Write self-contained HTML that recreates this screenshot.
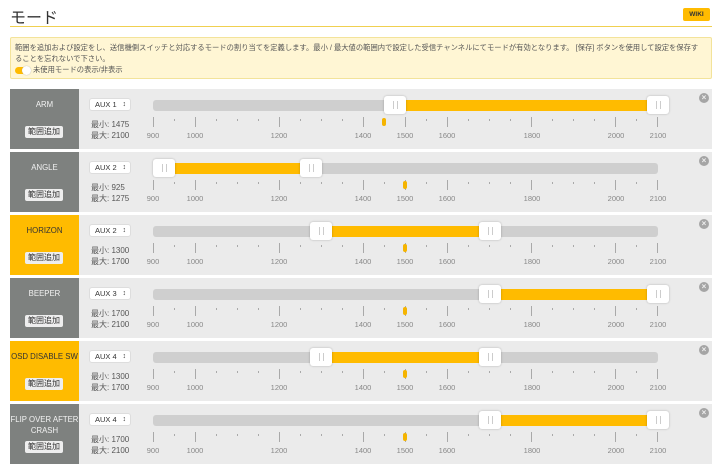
<!DOCTYPE html>
<html><head><meta charset="utf-8"><style>
*{margin:0;padding:0;box-sizing:border-box}
body{width:720px;height:472px;background:#fff;position:relative;overflow:hidden;font-family:"Liberation Sans","Noto Sans CJK JP",sans-serif;color:#333}
.a{position:absolute}
.row{position:absolute;left:0;width:720px;height:60px}
.bg{position:absolute;left:79px;top:0;width:633px;height:60px;background:#ebebeb}
.lab{position:absolute;left:10px;top:0;width:69px;height:60px;background:#7e817f;color:#f2f2f2;font-size:7.8px;text-align:center}
.lab.y{background:#ffbb00;color:#333}
.lab .t{position:absolute;left:0;right:0;top:10px;line-height:11px}
.btn{position:absolute;left:15px;top:37px;width:38px;height:12px;background:#eee;border-radius:2px;color:#333;font-size:8px;line-height:12px;text-align:center}
.sel{position:absolute;left:89px;top:9px;width:42px;height:13px;background:#fff;border:1px solid #ddd;border-radius:3px;font-size:7.5px;line-height:11px;padding-left:5px;color:#333}
.sel:after{content:"\2195";position:absolute;right:4px;top:0;font-size:7px}
.mm{position:absolute;left:91px;font-size:8px;color:#555;line-height:10px}
.trk{position:absolute;left:153px;top:11px;width:505px;height:11px;background:#cfcfcf;border-radius:3px}
.fill{position:absolute;top:11px;height:11px;background:#ffbb00}
.h{position:absolute;top:7px;width:22px;height:18px;background:#fff;border-radius:3px;box-shadow:0 0 2px rgba(0,0,0,.25)}
.h:after{content:"";position:absolute;left:9px;top:5px;width:3px;height:8px;border-left:1px solid #ccc;border-right:1px solid #ccc}
.mk{position:absolute;top:29px;width:4px;height:8px;background:#f5b400;border-radius:2px}
.tk{position:absolute;left:0;top:0}
.tl{position:absolute;top:42px;font-size:7.5px;color:#888;width:30px;margin-left:-15px;text-align:center}
.x{position:absolute;left:699px;top:4px;width:10px;height:10px;border-radius:50%;background:#a5a5a5;color:#eee;font-size:8px;line-height:10px;text-align:center;font-weight:bold}
</style></head><body>
<div class="a" style="left:10px;top:4px;font-size:16px;color:#333">モード</div>
<div class="a" style="left:683px;top:8px;width:27px;height:13px;background:#ffbb00;border-radius:2px;font-size:6.5px;font-weight:bold;text-align:center;line-height:13px;color:#333">WIKI</div>
<div class="a" style="left:10px;top:26px;width:702px;height:1px;background:#f0d050"></div>
<div class="a" style="left:10px;top:37px;width:702px;height:42px;background:#fff6d4;border:1px solid #f3e39a;border-radius:2px"></div>
<div class="a" style="left:15px;top:42px;width:690px;font-size:7.3px;line-height:11px;color:#555">範囲を追加および設定をし、送信機側スイッチと対応するモードの割り当てを定義します。最小 / 最大値の範囲内で設定した受信チャンネルにてモードが有効となります。 [保存] ボタンを使用して設定を保存す<br>ることを忘れないで下さい。</div>
<div class="a" style="left:15px;top:67px;width:14px;height:7px;background:#ffbb00;border-radius:4px"></div>
<div class="a" style="left:22px;top:66px;width:9px;height:9px;background:#fff;border-radius:50%;box-shadow:0 0 1px #999"></div>
<div class="a" style="left:33px;top:65px;font-size:7.3px;color:#555">未使用モードの表示/非表示</div>

<svg width="0" height="0" style="position:absolute"><defs><g id="tk" stroke="#999" stroke-width="0.8">
<line x1="153.5" y1="28" x2="153.5" y2="38"/><line x1="174.5" y1="30" x2="174.5" y2="32"/><line x1="195.5" y1="28" x2="195.5" y2="38"/>
<line x1="216.5" y1="30" x2="216.5" y2="32"/><line x1="237.5" y1="30" x2="237.5" y2="32"/><line x1="258.5" y1="30" x2="258.5" y2="32"/><line x1="279.5" y1="28" x2="279.5" y2="38"/>
<line x1="300.5" y1="30" x2="300.5" y2="32"/><line x1="321.5" y1="30" x2="321.5" y2="32"/><line x1="342.5" y1="30" x2="342.5" y2="32"/><line x1="363.5" y1="28" x2="363.5" y2="38"/>
<line x1="384.5" y1="30" x2="384.5" y2="32"/><line x1="405.5" y1="28" x2="405.5" y2="38"/><line x1="426.5" y1="30" x2="426.5" y2="32"/><line x1="447.5" y1="28" x2="447.5" y2="38"/>
<line x1="468.5" y1="30" x2="468.5" y2="32"/><line x1="489.5" y1="30" x2="489.5" y2="32"/><line x1="510.5" y1="30" x2="510.5" y2="32"/><line x1="531.5" y1="28" x2="531.5" y2="38"/>
<line x1="552.5" y1="30" x2="552.5" y2="32"/><line x1="573.5" y1="30" x2="573.5" y2="32"/><line x1="594.5" y1="30" x2="594.5" y2="32"/><line x1="615.5" y1="28" x2="615.5" y2="38"/>
<line x1="636.5" y1="30" x2="636.5" y2="32"/><line x1="657.5" y1="28" x2="657.5" y2="38"/></g></defs></svg>

<div class="row" style="top:89px"><div class="bg"></div><div class="lab"><div class="t">ARM</div><div class="btn">範囲追加</div></div>
<div class="sel">AUX 1</div><div class="mm" style="top:31px">最小: 1475</div><div class="mm" style="top:42px">最大: 2100</div>
<div class="trk"></div><div class="fill" style="left:395px;width:263px"></div><div class="h" style="left:384px"></div><div class="h" style="left:647px"></div>
<svg class="tk" width="720" height="60"><use href="#tk"/></svg><div class="mk" style="left:382px"></div>
<div class="tl" style="left:153px">900</div><div class="tl" style="left:195px">1000</div><div class="tl" style="left:279px">1200</div><div class="tl" style="left:363px">1400</div><div class="tl" style="left:405px">1500</div><div class="tl" style="left:447px">1600</div><div class="tl" style="left:532px">1800</div><div class="tl" style="left:616px">2000</div><div class="tl" style="left:658px">2100</div><div class="x">×</div></div>

<div class="row" style="top:152px"><div class="bg"></div><div class="lab"><div class="t">ANGLE</div><div class="btn">範囲追加</div></div>
<div class="sel">AUX 2</div><div class="mm" style="top:31px">最小: 925</div><div class="mm" style="top:42px">最大: 1275</div>
<div class="trk"></div><div class="fill" style="left:164px;width:147px"></div><div class="h" style="left:153px"></div><div class="h" style="left:300px"></div>
<svg class="tk" width="720" height="60"><use href="#tk"/></svg><div class="mk" style="left:403px"></div>
<div class="tl" style="left:153px">900</div><div class="tl" style="left:195px">1000</div><div class="tl" style="left:279px">1200</div><div class="tl" style="left:363px">1400</div><div class="tl" style="left:405px">1500</div><div class="tl" style="left:447px">1600</div><div class="tl" style="left:532px">1800</div><div class="tl" style="left:616px">2000</div><div class="tl" style="left:658px">2100</div><div class="x">×</div></div>

<div class="row" style="top:215px"><div class="bg"></div><div class="lab y"><div class="t">HORIZON</div><div class="btn">範囲追加</div></div>
<div class="sel">AUX 2</div><div class="mm" style="top:31px">最小: 1300</div><div class="mm" style="top:42px">最大: 1700</div>
<div class="trk"></div><div class="fill" style="left:321px;width:169px"></div><div class="h" style="left:310px"></div><div class="h" style="left:479px"></div>
<svg class="tk" width="720" height="60"><use href="#tk"/></svg><div class="mk" style="left:403px"></div>
<div class="tl" style="left:153px">900</div><div class="tl" style="left:195px">1000</div><div class="tl" style="left:279px">1200</div><div class="tl" style="left:363px">1400</div><div class="tl" style="left:405px">1500</div><div class="tl" style="left:447px">1600</div><div class="tl" style="left:532px">1800</div><div class="tl" style="left:616px">2000</div><div class="tl" style="left:658px">2100</div><div class="x">×</div></div>

<div class="row" style="top:278px"><div class="bg"></div><div class="lab"><div class="t">BEEPER</div><div class="btn">範囲追加</div></div>
<div class="sel">AUX 3</div><div class="mm" style="top:31px">最小: 1700</div><div class="mm" style="top:42px">最大: 2100</div>
<div class="trk"></div><div class="fill" style="left:490px;width:168px"></div><div class="h" style="left:479px"></div><div class="h" style="left:647px"></div>
<svg class="tk" width="720" height="60"><use href="#tk"/></svg><div class="mk" style="left:403px"></div>
<div class="tl" style="left:153px">900</div><div class="tl" style="left:195px">1000</div><div class="tl" style="left:279px">1200</div><div class="tl" style="left:363px">1400</div><div class="tl" style="left:405px">1500</div><div class="tl" style="left:447px">1600</div><div class="tl" style="left:532px">1800</div><div class="tl" style="left:616px">2000</div><div class="tl" style="left:658px">2100</div><div class="x">×</div></div>

<div class="row" style="top:341px"><div class="bg"></div><div class="lab y"><div class="t">OSD DISABLE SW</div><div class="btn">範囲追加</div></div>
<div class="sel">AUX 4</div><div class="mm" style="top:31px">最小: 1300</div><div class="mm" style="top:42px">最大: 1700</div>
<div class="trk"></div><div class="fill" style="left:321px;width:169px"></div><div class="h" style="left:310px"></div><div class="h" style="left:479px"></div>
<svg class="tk" width="720" height="60"><use href="#tk"/></svg><div class="mk" style="left:403px"></div>
<div class="tl" style="left:153px">900</div><div class="tl" style="left:195px">1000</div><div class="tl" style="left:279px">1200</div><div class="tl" style="left:363px">1400</div><div class="tl" style="left:405px">1500</div><div class="tl" style="left:447px">1600</div><div class="tl" style="left:532px">1800</div><div class="tl" style="left:616px">2000</div><div class="tl" style="left:658px">2100</div><div class="x">×</div></div>

<div class="row" style="top:404px"><div class="bg"></div><div class="lab"><div class="t">FLIP OVER AFTER<br>CRASH</div><div class="btn">範囲追加</div></div>
<div class="sel">AUX 4</div><div class="mm" style="top:31px">最小: 1700</div><div class="mm" style="top:42px">最大: 2100</div>
<div class="trk"></div><div class="fill" style="left:490px;width:168px"></div><div class="h" style="left:479px"></div><div class="h" style="left:647px"></div>
<svg class="tk" width="720" height="60"><use href="#tk"/></svg><div class="mk" style="left:403px"></div>
<div class="tl" style="left:153px">900</div><div class="tl" style="left:195px">1000</div><div class="tl" style="left:279px">1200</div><div class="tl" style="left:363px">1400</div><div class="tl" style="left:405px">1500</div><div class="tl" style="left:447px">1600</div><div class="tl" style="left:532px">1800</div><div class="tl" style="left:616px">2000</div><div class="tl" style="left:658px">2100</div><div class="x">×</div></div>
</body></html>
